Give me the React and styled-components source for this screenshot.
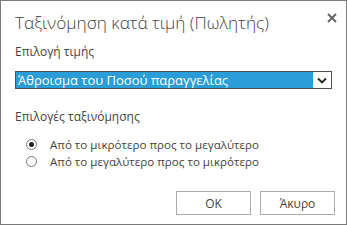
import React from 'react'
import styled, { createGlobalStyle } from 'styled-components'

const Global = createGlobalStyle`
  html, body {
    margin: 0;
    padding: 0;
    background: #ffffff;
  }
  body {
    font-family: "Open Sans", "Noto Sans", sans-serif;
    color: #444444;
  }
`

const Dialog = styled.div`
  box-sizing: border-box;
  width: 347px;
  height: 225px;
  border: 1px solid #7a7a7a;
  background: #ffffff;
  padding: 0 14px 0 14px;
  display: flex;
  flex-direction: column;
`

const Header = styled.div`
  display: flex;
  justify-content: space-between;
  align-items: flex-start;
  height: 38px;
`

const Title = styled.h1`
  margin: 10px 0 0 0;
  font-size: 17.2px;
  font-weight: 300;
  color: #444444;
  line-height: 24px;
`

const Close = styled.button`
  border: none;
  background: none;
  padding: 0;
  margin: 12px -5px 0 0;
  width: 10px;
  height: 10px;
  display: flex;
  cursor: pointer;
`

const Label = styled.div`
  font-size: 12px;
  line-height: 16px;
  color: #444444;
  margin-top: ${({ top }) => top}px;
`

const Select = styled.div`
  box-sizing: border-box;
  margin-top: 11px;
  height: 18px;
  width: 317px;
  border: 1px solid #4d4d4d;
  display: flex;
  align-items: stretch;
  background: #ffffff;
`

const Chosen = styled.div`
  flex: 1;
  background: #2a9dd8;
  color: #ffffff;
  font-size: 13px;
  line-height: 16px;
  padding-left: 2px;
  margin: 0;
`

const Arrow = styled.div`
  width: 18px;
  display: flex;
  align-items: center;
  justify-content: center;
`

const Options = styled.div`
  margin-top: 12px;
  padding-left: 11px;
  display: flex;
  flex-direction: column;
  gap: 1px;
`

const Option = styled.label`
  display: flex;
  align-items: center;
  gap: 13px;
  font-size: 11.6px;
  line-height: 15.5px;
  color: #444444;
`

const Radio = styled.span`
  box-sizing: border-box;
  width: 11px;
  height: 11px;
  border-radius: 50%;
  border: 1px solid #7a7a7a;
  display: flex;
  align-items: center;
  justify-content: center;
  &::after {
    content: '';
    width: 5px;
    height: 5px;
    border-radius: 50%;
    background: ${({ checked }) => (checked ? '#222222' : 'transparent')};
  }
`

const Footer = styled.div`
  margin-top: auto;
  margin-bottom: 9px;
  margin-right: -3px;
  display: flex;
  justify-content: flex-end;
  gap: 9px;
`

const Button = styled.button`
  box-sizing: border-box;
  width: 75px;
  height: 24px;
  border: 1px solid #ababab;
  background: #ffffff;
  color: #444444;
  font-family: inherit;
  font-size: 12px;
  padding: 0;
`

export default function App() {
  return (
    <>
      <Global />
      <Dialog>
        <Header>
          <Title>Ταξινόμηση κατά τιμή (Πωλητής)</Title>
          <Close aria-label="close">
            <svg width="10" height="10" viewBox="0 0 10 10">
              <path d="M1 1 L9 9 M9 1 L1 9" stroke="#666" strokeWidth="2" />
            </svg>
          </Close>
        </Header>
        <Label top={5}>Επιλογή τιμής</Label>
        <Select>
          <Chosen>Άθροισμα του Ποσού παραγγελίας</Chosen>
          <Arrow>
            <svg width="10" height="7" viewBox="0 0 10 7">
              <path d="M1 1.5 L5 5.5 L9 1.5" fill="none" stroke="#222" strokeWidth="1.8" />
            </svg>
          </Arrow>
        </Select>
        <Label top={20}>Επιλογές ταξινόμησης</Label>
        <Options>
          <Option>
            <Radio checked />
            Από το μικρότερο προς το μεγαλύτερο
          </Option>
          <Option>
            <Radio />
            Από το μεγαλύτερο προς το μικρότερο
          </Option>
        </Options>
        <Footer>
          <Button>OK</Button>
          <Button>Άκυρο</Button>
        </Footer>
      </Dialog>
    </>
  )
}
